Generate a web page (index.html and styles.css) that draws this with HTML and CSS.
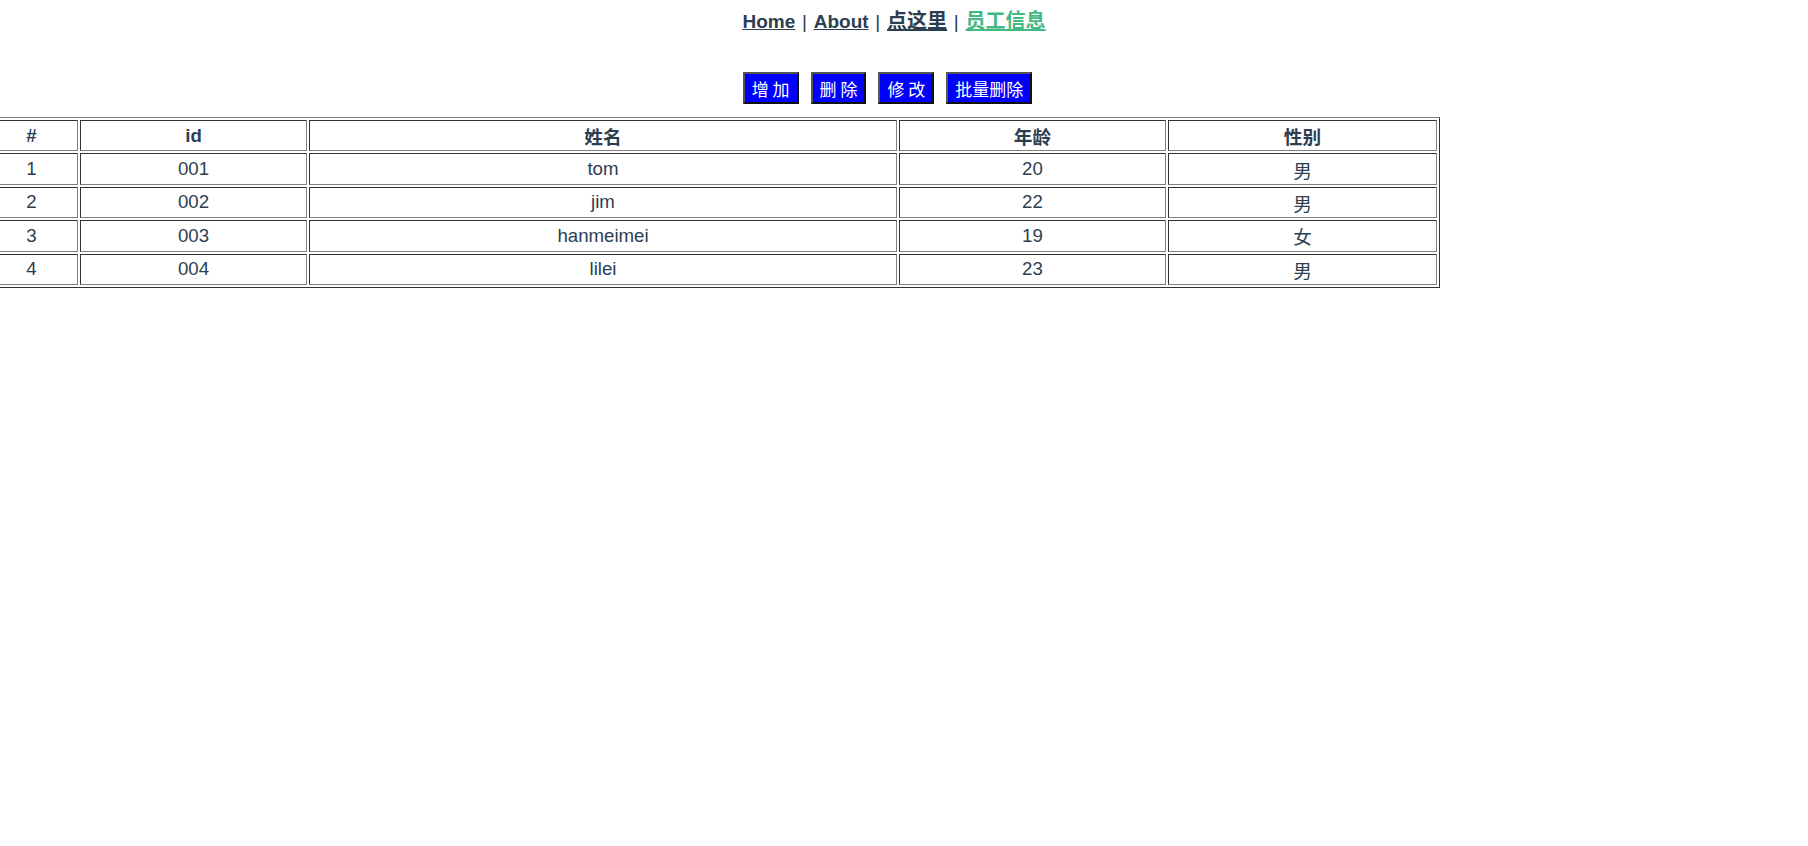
FILE: index.html
```html
<!DOCTYPE html>
<html lang="zh-CN">
<head>
<meta charset="utf-8">
<title>员工信息</title>
<link rel="stylesheet" href="styles.css">
</head>
<body>
<div class="app">
  <nav class="nav">
    <a class="nav-link" href="#">Home</a> | <a class="nav-link" href="#">About</a> | <a class="nav-link cjk-link" href="#">点这里</a> | <a class="nav-link cjk-link active" href="#">员工信息</a>
  </nav>
  <div class="toolbar">
    <button class="btn">增 加</button>
    <button class="btn">删 除</button>
    <button class="btn">修 改</button>
    <button class="btn">批量删除</button>
  </div>
  <table class="data-table">
    <thead>
      <tr>
        <th class="c-num">#</th>
        <th class="c-id">id</th>
        <th class="c-name">姓名</th>
        <th class="c-age">年龄</th>
        <th class="c-sex">性别</th>
      </tr>
    </thead>
    <tbody>
      <tr><td>1</td><td>001</td><td>tom</td><td>20</td><td class="cjk">男</td></tr>
      <tr><td>2</td><td>002</td><td>jim</td><td>22</td><td class="cjk">男</td></tr>
      <tr><td>3</td><td>003</td><td>hanmeimei</td><td>19</td><td class="cjk">女</td></tr>
      <tr><td>4</td><td>004</td><td>lilei</td><td>23</td><td class="cjk">男</td></tr>
    </tbody>
  </table>
</div>
</body>
</html>
```
FILE: styles.css
```css
html, body {
  margin: 0;
  padding: 0;
  background: #ffffff;
}

body {
  font-family: "Liberation Sans", Arial, "Noto Sans CJK SC", sans-serif;
  color: #2c3e50;
}

.nav {
  text-align: center;
  padding: 11px 20px 0 0;
  font-size: 19px;
  line-height: 21px;
  word-spacing: 1.5px;
}

.nav-link {
  font-weight: bold;
  color: #2c3e50;
  text-decoration: underline;
}

.nav-link.cjk-link {
  font-size: 20px;
}

.nav-link.active {
  color: #42b983;
}

.toolbar {
  display: flex;
  justify-content: center;
  gap: 12px;
  margin-top: 40px;
  padding-right: 33px;
}

.btn {
  height: 32px;
  padding: 0 7px;
  margin: 0;
  background: #0000ff;
  color: #ffffff;
  font-family: "Noto Sans CJK SC", sans-serif;
  font-size: 17px;
  line-height: 1;
  border: 2px solid;
  border-color: #555555 #111111 #111111 #555555;
}

.data-table {
  margin: 13px 0 0 -18px;
  width: 1458px;
  table-layout: fixed;
  border-collapse: separate;
  border-spacing: 2px;
  border: 1px solid;
  border-color: #808080 #333333 #333333 #808080;
  font-size: 18.67px;
  color: #2c3e50;
}

.data-table th,
.data-table td {
  box-sizing: border-box;
  height: 31.4px;
  padding: 1px;
  border: 1px solid;
  border-color: #333333 #808080 #808080 #333333;
  text-align: center;
  vertical-align: middle;
}

.data-table th {
  font-weight: bold;
}

.data-table td.cjk {
  font-weight: normal;
}

.c-num { width: 93px; }
.c-id { width: 227px; }
.c-name { width: 588px; }
.c-age { width: 267px; }
.c-sex { width: 269px; }
```
